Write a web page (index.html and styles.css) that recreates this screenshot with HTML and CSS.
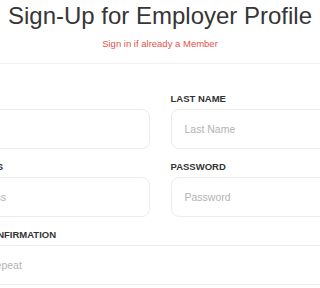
FILE: index.html
```html
<!DOCTYPE html>
<html>
<head>
<meta charset="utf-8">
<link rel="stylesheet" href="styles.css">
</head>
<body>
<div class="page">
  <h1 class="title">Sign-Up for Employer Profile</h1>
  <p class="subtitle">Sign in if already a Member</p>
  <div class="card">
    <form class="form">
      <div class="field">
        <label class="label">FIRST NAME</label>
        <input class="input" type="text" placeholder="First Name">
      </div>
      <div class="field">
        <label class="label">LAST NAME</label>
        <input class="input" type="text" placeholder="Last Name">
      </div>
      <div class="field">
        <label class="label">EMAIL ADDRESS</label>
        <input class="input" type="text" placeholder="Email Address">
      </div>
      <div class="field">
        <label class="label">PASSWORD</label>
        <input class="input" type="password" placeholder="Password">
      </div>
      <div class="field wide">
        <label class="label">PASSWORD CONFIRMATION</label>
        <input class="input" type="password" placeholder="Password Repeat">
      </div>
      <div class="field wide">
        <label class="label">COMPANY NAME</label>
        <input class="input" type="text" placeholder="Company Name">
      </div>
    </form>
  </div>
</div>
</body>
</html>
```
FILE: styles.css
```css
html, body {
  margin: 0;
  padding: 0;
  overflow: hidden;
  background: #ffffff;
}
body {
  font-family: "Liberation Sans", Arial, sans-serif;
  color: #333333;
}
.page {
  padding-top: 2px;
}
.title {
  margin: 0;
  font-size: 24px;
  line-height: 28px;
  font-weight: normal;
  text-align: center;
  color: #363636;
  white-space: nowrap;
}
.subtitle {
  margin: 7px 0 0;
  font-size: 9.5px;
  line-height: 13px;
  text-align: center;
  color: #e3524c;
}
.card {
  margin-top: 13px;
  border-top: 1px solid #f1f1f1;
  padding-top: 29px;
  display: flex;
  justify-content: center;
}
.form {
  flex: none;
  width: 470px;
  display: grid;
  grid-template-columns: 224.5px 224.5px;
  column-gap: 21px;
}
.field {
  display: flex;
  flex-direction: column;
  margin-bottom: 12.5px;
}
.wide {
  grid-column: 1 / 3;
}
.label {
  font-size: 9.5px;
  line-height: 11px;
  font-weight: bold;
  color: #333333;
  margin-bottom: 4.5px;
  white-space: nowrap;
}
.input {
  box-sizing: border-box;
  height: 40px;
  margin: 0;
  padding: 0 13px;
  border: 1px solid #ececec;
  border-radius: 8px;
  background: #ffffff;
  font-family: "Liberation Sans", Arial, sans-serif;
  font-size: 10.5px;
  color: #333333;
  outline: none;
}
.input::placeholder {
  color: #b3b3b3;
}
```
